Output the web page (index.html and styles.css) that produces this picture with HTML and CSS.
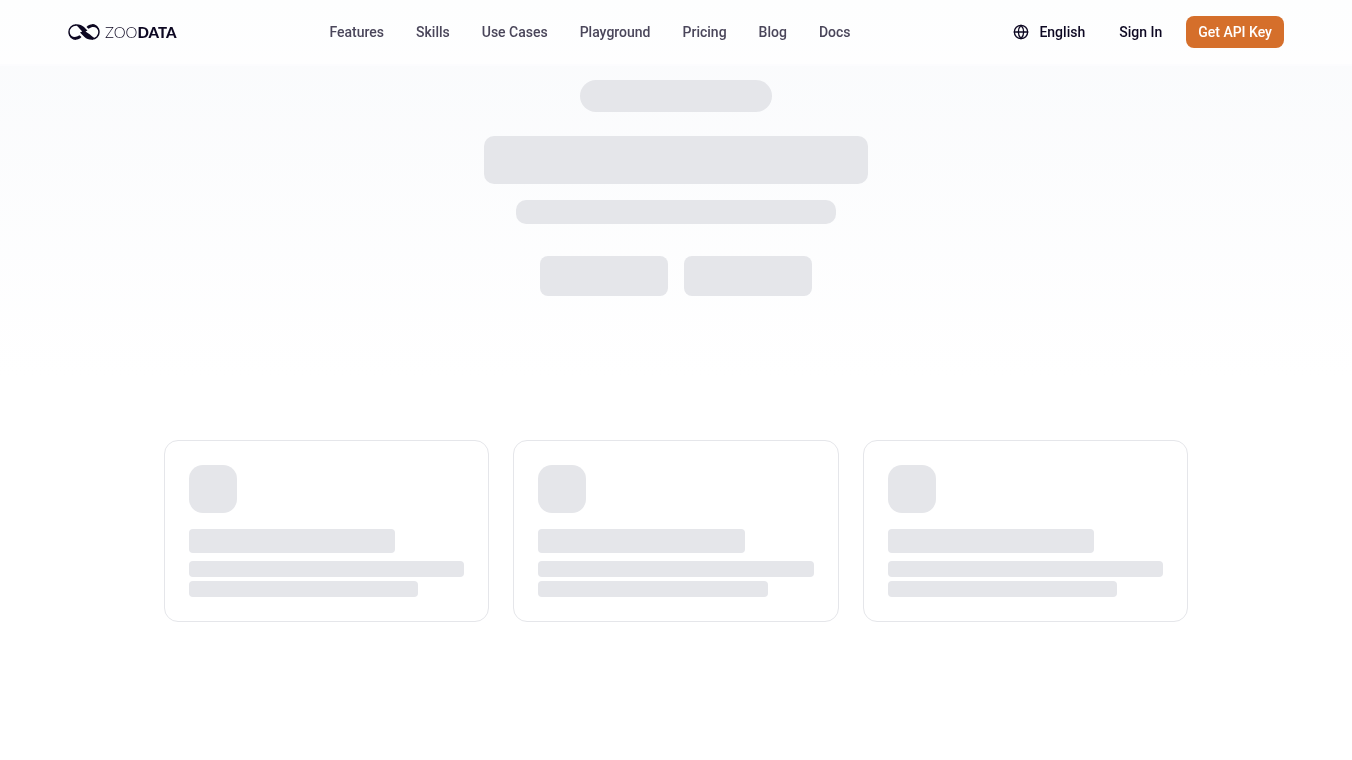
FILE: index.html
```html
<!DOCTYPE html>
<html lang="en">
<head>
  <meta charset="UTF-8">
  <meta name="viewport" content="width=device-width, initial-scale=1.0">
  <title>ZooData</title>
  <link rel="stylesheet" href="styles.css">
</head>
<body>
  <header class="site-header">
    <div class="header-inner">
      <a href="#" class="logo">
        <svg class="logo-mark" viewBox="0 0 32 16" aria-hidden="true">
          <path d="M8 .9A7 7 0 0 0 8 14.900" fill="none" stroke="currentColor" stroke-width="1.500"/>
          <path d="M24 1.100A7 7 0 0 1 24 15.100" fill="none" stroke="currentColor" stroke-width="1.500"/>
          <path d="M7.500 .2C11.500 0 14 1.200 16 3L19.500 6.600 17.500 7.600 22 10.500C23.500 12 24.500 12.800 26 13.500L24.500 15.800C21 16 18.500 14.800 16.500 13L12 8.600 14.200 7.600 11 4C10 2.500 9 1.900 7.500 1.600Z" fill="currentColor"/>
          <path d="M.7 8.500C2 12 5.500 14 9 12.600L11.500 11.200 13.500 13C11.800 14.700 10 15.700 7.500 15.700 4 15.700 1 13 .7 8.500Z" fill="currentColor"/>
          <path d="M18.500 3C20 1.400 22 .3 24.500 .3 28 .3 31 3 31.300 7.500 30 4 26.500 2 23 3.400L20.500 4.800Z" fill="currentColor"/>
        </svg>
        <span class="logo-text">ZOO<b>DATA</b></span>
      </a>

      <nav class="main-nav">
        <a href="#">Features</a>
        <a href="#">Skills</a>
        <a href="#">Use Cases</a>
        <a href="#">Playground</a>
        <a href="#">Pricing</a>
        <a href="#">Blog</a>
        <a href="#">Docs</a>
      </nav>

      <div class="header-actions">
        <button type="button" class="btn btn-lang">
          <svg class="icon" viewBox="0 0 24 24" aria-hidden="true">
            <circle cx="12" cy="12" r="10"/>
            <path d="M12 2a14.500 14.500 0 0 0 0 20 14.500 14.500 0 0 0 0-20"/>
            <path d="M2 12h20"/>
          </svg>
          English
        </button>
        <a href="#" class="btn">Sign In</a>
        <a href="#" class="btn btn-primary">Get API Key</a>
      </div>
    </div>
  </header>

  <main>
    <section class="hero">
      <div class="skeleton hero-badge"></div>
      <div class="skeleton hero-title"></div>
      <div class="skeleton hero-subtitle"></div>
      <div class="hero-buttons">
        <div class="skeleton hero-button"></div>
        <div class="skeleton hero-button"></div>
      </div>
    </section>

    <section class="features">
      <div class="card">
        <div class="skeleton card-icon"></div>
        <div class="skeleton card-title"></div>
        <div class="skeleton card-line"></div>
        <div class="skeleton card-line short"></div>
      </div>
      <div class="card">
        <div class="skeleton card-icon"></div>
        <div class="skeleton card-title"></div>
        <div class="skeleton card-line"></div>
        <div class="skeleton card-line short"></div>
      </div>
      <div class="card">
        <div class="skeleton card-icon"></div>
        <div class="skeleton card-title"></div>
        <div class="skeleton card-line"></div>
        <div class="skeleton card-line short"></div>
      </div>
    </section>
  </main>
</body>
</html>
```

FILE: styles.css
```css
* {
  box-sizing: border-box;
}
body {
  margin: 0;
  background-color: #fff;
  color: #0d0822;
  font-family: Roboto, Arial, sans-serif;
  font-size: 14px;
  line-height: 20px;
}
a {
  color: inherit;
  text-decoration: none;
}

/* header */
.site-header {
  position: fixed;
  top: 0;
  left: 0;
  right: 0;
  z-index: 10;
  background-color: rgba(255, 255, 255, 0.7);
  border-bottom: 2px solid #fcfcfe;
}
.header-inner {
  display: flex;
  align-items: center;
  justify-content: space-between;
  max-width: 1280px;
  height: 64px;
  margin: 0 auto;
  padding: 0 32px;
}
.logo {
  display: flex;
  align-items: center;
  gap: 5px;
}
.logo-mark {
  width: 32px;
  height: 16px;
}
.logo-text {
  font-family: Lato, sans-serif;
  font-size: 15px;
  font-weight: 300;
}
.logo-text b {
  font-weight: 900;
}
.main-nav {
  display: flex;
  gap: 32px;
  color: #4a465a;
  font-weight: 500;
}
.header-actions {
  display: flex;
  align-items: center;
  gap: 12px;
}
.btn {
  display: flex;
  align-items: center;
  height: 32px;
  padding: 0 12px;
  border: none;
  border-radius: 8px;
  background: none;
  color: inherit;
  font: inherit;
  font-weight: 500;
  cursor: pointer;
}
.btn-lang {
  gap: 10px;
  padding: 0 10px;
}
.btn-primary {
  background-color: #d56f2b;
  color: #fff;
}
.icon {
  width: 16px;
  height: 16px;
  fill: none;
  stroke: currentColor;
  stroke-width: 2;
  stroke-linecap: round;
  stroke-linejoin: round;
}

/* loading placeholders */
.skeleton {
  background-color: #e5e6ea;
  border-radius: 10px;
}
.hero {
  display: flex;
  flex-direction: column;
  align-items: center;
  padding: 80px 16px;
  background: linear-gradient(to bottom, #f9fafc, #fff);
}
.hero-badge {
  width: 192px;
  height: 32px;
  margin-bottom: 24px;
  border-radius: 16px;
}
.hero-title {
  width: 384px;
  max-width: 100%;
  height: 48px;
  margin-bottom: 16px;
}
.hero-subtitle {
  width: 320px;
  max-width: 100%;
  height: 24px;
  margin-bottom: 32px;
}
.hero-buttons {
  display: flex;
  gap: 16px;
}
.hero-button {
  width: 128px;
  height: 40px;
  border-radius: 8px;
}

.features {
  display: grid;
  grid-template-columns: repeat(3, 1fr);
  gap: 24px;
  max-width: 1024px;
  margin: 0 auto;
  padding: 64px 0;
}
.card {
  padding: 24px;
  border: 1px solid #e5e6ea;
  border-radius: 14px;
}
.card-icon {
  width: 48px;
  height: 48px;
  margin-bottom: 16px;
  border-radius: 14px;
}
.card-title {
  width: 75%;
  height: 24px;
  margin-bottom: 8px;
  border-radius: 4px;
}
.card-line {
  height: 16px;
  margin-bottom: 4px;
  border-radius: 4px;
}
.card-line.short {
  width: 83.3333%;
  margin-bottom: 0;
}
```
